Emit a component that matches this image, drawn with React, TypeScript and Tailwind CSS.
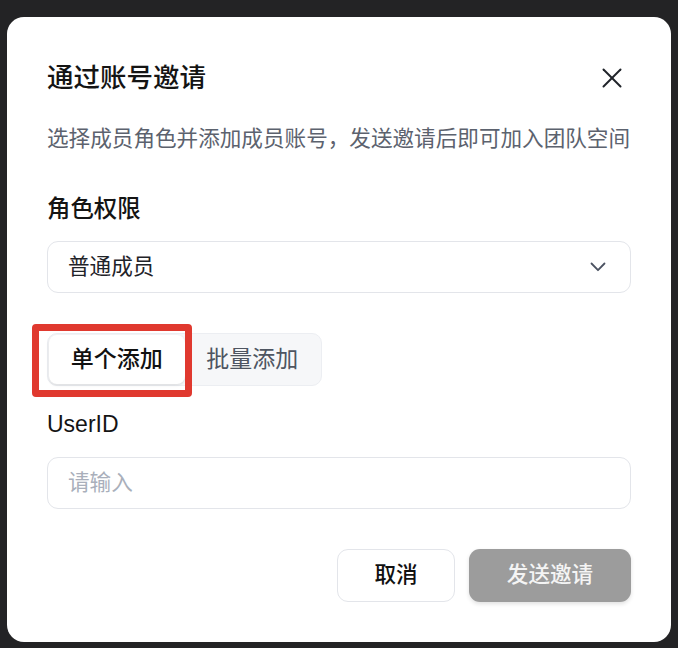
import React from "react";

export default function App() {
  return (
    <div
      className="w-[678px] h-[648px] bg-[#232325] pt-[17px] pl-[7px]"
      style={{ fontFamily: '"Liberation Sans", "Noto Sans CJK SC", sans-serif' }}
    >
      <div className="w-[664px] h-[625px] bg-white rounded-[17px] px-[40px] pt-[43px]">
        <div className="flex items-center justify-between h-[36px]">
          <div className="text-[26.5px] leading-[36px] font-medium text-[#141414]">通过账号邀请</div>
          <button className="w-[24px] h-[24px] flex items-center justify-center mr-[7px]">
            <svg width="20" height="20" viewBox="0 0 20 20" fill="none" stroke="#1f2329" strokeWidth="2" strokeLinecap="round">
              <line x1="1.5" y1="1.5" x2="18.5" y2="18.5" />
              <line x1="18.5" y1="1.5" x2="1.5" y2="18.5" />
            </svg>
          </button>
        </div>
        <div className="mt-[27px] text-[21.6px] leading-[32px] text-[#5c626e] whitespace-nowrap">
          选择成员角色并添加成员账号，发送邀请后即可加入团队空间
        </div>
        <div className="mt-[38px] text-[23.4px] leading-[32px] font-medium text-[#141414]">角色权限</div>
        <div className="mt-[16px] h-[52px] border border-[#e3e5ea] rounded-[11px] flex items-center justify-between pl-[20px] pr-[24px]">
          <span className="text-[21.6px] text-[#1f2329]">普通成员</span>
          <svg width="16" height="10" viewBox="0 0 16 10" fill="none" stroke="#4b5261" strokeWidth="1.8" strokeLinecap="round" strokeLinejoin="round">
            <polyline points="1.5,1.5 8,8.2 14.5,1.5" />
          </svg>
        </div>
        <div className="relative mt-[40px] w-[275px] h-[53px] border border-[#eceef2] bg-[#f6f7f9] rounded-[10px] p-[1px] grid grid-cols-2">
          <div className="bg-white rounded-[8px] shadow-[0_1px_3px_rgba(0,0,0,0.12)] flex items-center justify-center text-[23px] font-medium text-[#111]">
            单个添加
          </div>
          <div className="flex items-center justify-center text-[23px] text-[#4e5561]">批量添加</div>
          <div className="absolute left-[-16px] top-[-10px] w-[160px] h-[73px] border-[7px] border-[#e0392f] rounded-[4px] pointer-events-none" />
        </div>
        <div className="mt-[22px] text-[23px] leading-[32px] text-[#141414]">UserID</div>
        <div className="mt-[17px] h-[52px] border border-[#e3e5ea] rounded-[11px] flex items-center pl-[20px]">
          <span className="text-[21.6px] text-[#a9afbb]">请输入</span>
        </div>
        <div className="mt-[40px] flex justify-end gap-[14px]">
          <button className="w-[118px] h-[53px] border border-[#e3e5ea] rounded-[11px] bg-white text-[21.6px] font-medium text-[#111]">
            取消
          </button>
          <button className="w-[162px] h-[53px] rounded-[11px] bg-[#9c9c9c] text-[21.6px] font-medium text-[#f4f4f4] shadow-[0_2px_4px_rgba(0,0,0,0.12)]">
            发送邀请
          </button>
        </div>
      </div>
    </div>
  );
}
